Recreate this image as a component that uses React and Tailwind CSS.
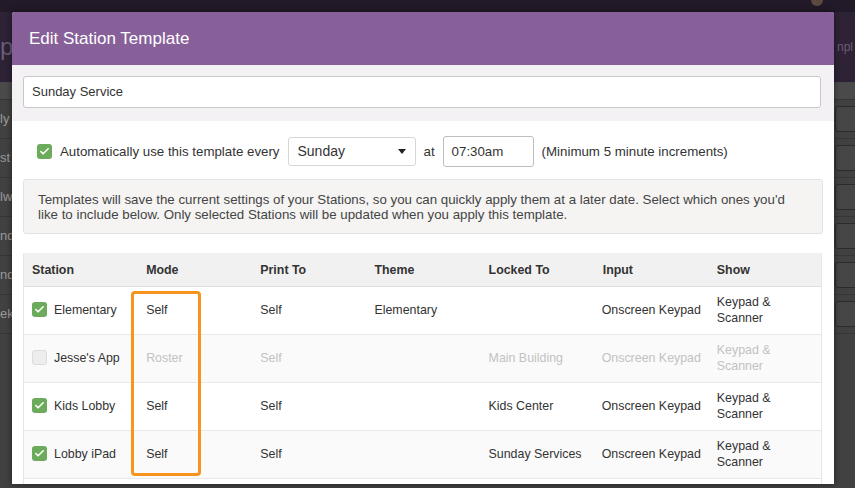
import { Check } from 'lucide-react';

const rows = [
  { name: 'Elementary', on: true, mode: 'Self', print: 'Self', theme: 'Elementary', locked: '', input: 'Onscreen Keypad' },
  { name: "Jesse's App", on: false, mode: 'Roster', print: 'Self', theme: '', locked: 'Main Building', input: 'Onscreen Keypad' },
  { name: 'Kids Lobby', on: true, mode: 'Self', print: 'Self', theme: '', locked: 'Kids Center', input: 'Onscreen Keypad' },
  { name: 'Lobby iPad', on: true, mode: 'Self', print: 'Self', theme: '', locked: 'Sunday Services', input: 'Onscreen Keypad' },
];

// only the tails that peek out left of the dialog
const bgRows = ['ly', 'st', 'lw', 'nd', 'nd', 'ek'];

function Box({ on }) {
  if (!on) {
    return <span className="inline-block h-[15px] w-[15px] shrink-0 rounded-[3px] border border-[#dcdcdc] bg-[#ededed]" />;
  }
  return (
    <span className="inline-flex h-[15px] w-[15px] shrink-0 items-center justify-center rounded-[3px] bg-[#6dab5c]">
      <Check size={11} strokeWidth={3.5} className="text-white" />
    </span>
  );
}

export default function App() {
  return (
    <div className="relative h-[488px] w-[855px] overflow-hidden bg-[#414141] font-['Liberation_Sans',Arial,sans-serif]">
      {/* page behind the dialog */}
      <div className="flex h-[12px] items-start justify-end bg-[#221a28] pr-[32px]">
        <span className="mt-[-6px] h-[12px] w-[12px] rounded-full bg-[#5a4a40]" />
      </div>
      <div className="flex h-[70px] items-center justify-between bg-[#2d2236]">
        <span className="text-[24px] leading-none text-[#6b5c74]">p</span>
        <span className="mr-[2px] text-[12px] text-[#6b5c74]">npl</span>
      </div>
      <div className="h-[18px] border-b border-[#363636] bg-[#4a4a4a]" />
      {bgRows.map((t, i) => (
        <div key={i} className="flex h-[39px] items-center justify-between border-b border-[#363636]">
          <span className="whitespace-nowrap text-[13px] text-[#9b9b9b]">{t}</span>
          <span className="mr-[-12px] h-[26px] w-[32px] rounded-[3px] border border-[#2b2b2b] bg-[#464646]" />
        </div>
      ))}

      {/* dialog */}
      <div className="absolute left-[12px] top-[12px] h-[472px] w-[822px] overflow-hidden rounded-t-[3px] bg-white shadow-[0_0_6px_rgba(0,0,0,0.5)]">
        <div className="flex h-[53px] items-center bg-[#87609a] px-[17px] text-[17px] text-white">Edit Station Template</div>
        <div className="h-[56px] bg-[#f3f1f4] px-[11px] pt-[11px]">
          <div className="flex h-[32px] w-[798px] items-center rounded-[3px] border border-[#c8c8c8] bg-white px-[8px] text-[13px] text-[#333]">
            Sunday Service
          </div>
        </div>

        <div className="px-[11px]">
          <div className="mt-[15px] flex h-[31px] items-center pl-[14px] text-[13.3px] text-[#333]">
            <Box on />
            <span className="ml-[8px]">Automatically use this template every</span>
            <div className="ml-[8px] flex h-[29px] w-[128px] items-center justify-between rounded-[3px] border border-[#d6d6d6] px-[9px] text-[14px]">
              <span>Sunday</span>
              <span className="h-0 w-0 border-x-[4px] border-t-[5px] border-x-transparent border-t-[#222]" />
            </div>
            <span className="ml-[8px]">at</span>
            <div className="ml-[8px] flex h-[31px] w-[91px] items-center rounded-[3px] border border-[#bdbdbd] px-[8px] text-[13.3px]">07:30am</div>
            <span className="ml-[8px]">(Minimum 5 minute increments)</span>
          </div>

          <div className="mt-[12px] h-[55px] rounded-[3px] border border-[#e2e2e2] bg-[#f5f4f3] px-[14px] pt-[12px] text-[13.3px] leading-[15px] text-[#444]">
            Templates will save the current settings of your Stations, so you can quickly apply them at a later date. Select which ones you'd
            <br />
            like to include below. Only selected Stations will be updated when you apply this template.
          </div>

          <div className="relative mt-[19px] w-[799px]">
            <table className="w-[799px] table-fixed border-collapse text-left text-[12.4px] text-[#333]">
              <thead>
                <tr className="h-[33px] border-b border-[#dedede] bg-[#f1f1f1]">
                  {['Station', 'Mode', 'Print To', 'Theme', 'Locked To', 'Input', 'Show'].map((h) => (
                    <th key={h} className="w-[114px] px-[9px] pt-[3px] font-bold">{h}</th>
                  ))}
                </tr>
              </thead>
              <tbody>
                {rows.map((r, i) => (
                  <tr
                    key={r.name}
                    className={`h-[48px] border-b border-[#e8e8e8] ${i % 2 ? 'bg-[#fafafa]' : 'bg-white'} ${r.on ? 'text-[#333]' : 'text-[#c2c2c2]'}`}
                  >
                    <td className="px-[9px]">
                      <div className="flex items-center gap-[7px] text-[#333]">
                        <Box on={r.on} />
                        <span className="whitespace-nowrap">{r.name}</span>
                      </div>
                    </td>
                    <td className="px-[9px]">{r.mode}</td>
                    <td className="px-[9px]">{r.print}</td>
                    <td className="px-[9px]">{r.theme}</td>
                    <td className="px-[9px]">{r.locked}</td>
                    <td className="whitespace-nowrap px-[8px]">{r.input}</td>
                    <td className="px-[9px] leading-[16px]">
                      Keypad &amp;
                      <br />
                      Scanner
                    </td>
                  </tr>
                ))}
                <tr className="h-[48px] bg-white">
                  <td colSpan={7} />
                </tr>
              </tbody>
            </table>
            <div className="pointer-events-none absolute left-[108px] top-[38px] h-[185px] w-[70px] rounded-[4px] border-[3px] border-[#f7941d]" />
            <div className="pointer-events-none absolute inset-y-0 left-0 w-[799px] border-x border-[#e6e6e6]" />
          </div>
        </div>
      </div>
    </div>
  );
}
